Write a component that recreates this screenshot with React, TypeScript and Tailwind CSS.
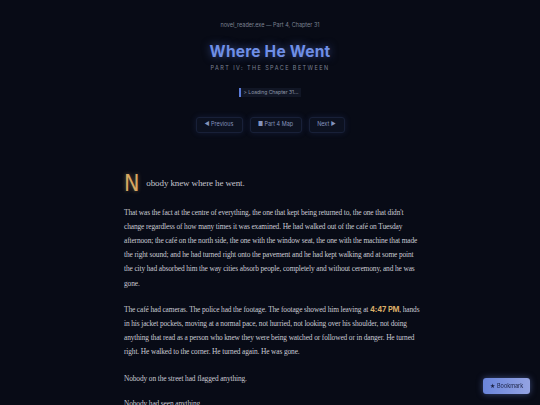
import React from 'react';

const serif = { fontFamily: '"Liberation Serif", "DejaVu Serif", serif' };

export default function App() {
  return (
    <div className="min-h-screen bg-[#080b16] text-[#c9cad3]">
      {/* Header */}
      <header className="flex flex-col items-center pt-[23px] font-['Inter',sans-serif]">
        <p className="text-[5.5px] text-[#7d8292] leading-none">novel_reader.exe — Part 4, Chapter 31</p>
        <h1 className="mt-[15px] text-[15.5px] font-bold leading-none tracking-[0.2px] text-[#6f8fe6] [text-shadow:0_0_8px_rgba(96,130,230,0.55)]">
          Where He Went
        </h1>
        <p className="mt-[7px] text-[5.5px] leading-none tracking-[0.26em] text-[#7b8194] uppercase">
          Part IV: The Space Between
        </p>
        <div className="mt-[16px] flex h-[9px] items-center border-l-2 border-[#5b7bd8] bg-[#111625] pl-[3px] pr-[3px]">
          <span className="text-[5px] leading-none text-[#8f96a8]">&gt; Loading Chapter 31...</span>
        </div>
        <nav className="mt-[20px] flex gap-[7px]">
          <button className="h-[16px] w-[47px] rounded-[3px] border border-[#182038] bg-[#0c1120] text-[5.5px] text-[#8593bd] shadow-[0_0_6px_rgba(70,100,200,0.18)]">
            ◀ Previous
          </button>
          <button className="h-[16px] w-[52px] rounded-[3px] border border-[#182038] bg-[#0c1120] text-[5.5px] text-[#8593bd] shadow-[0_0_6px_rgba(70,100,200,0.18)]">
            ■ Part 4 Map
          </button>
          <button className="h-[16px] w-[36px] rounded-[3px] border border-[#182038] bg-[#0c1120] text-[5.5px] text-[#8593bd] shadow-[0_0_6px_rgba(70,100,200,0.18)]">
            Next ▶
          </button>
        </nav>
      </header>

      {/* Chapter text */}
      <article className="mx-auto mt-[39px] w-[300px] pl-[4px] text-[7.4px] leading-[14.2px] tracking-[-0.12px]" style={serif}>
        <p className="flex items-center gap-[7px]">
          <span className="font-['Liberation_Sans_Narrow','DejaVu_Sans_Condensed',sans-serif] text-[23px] font-light leading-none text-[#d7a862] [text-shadow:0_0_4px_rgba(215,168,98,0.45)]">
            N
          </span>
          <span className="text-[9px] text-[#c4c5ce]">obody knew where he went.</span>
        </p>
        <p className="mt-[11px]">
          That was the fact at the centre of everything, the one that kept being returned to, the one that didn't change
          regardless of how many times it was examined. He had walked out of the café on Tuesday afternoon; the café on
          the north side, the one with the window seat, the one with the machine that made the right sound; and he had
          turned right onto the pavement and he had kept walking and at some point the city had absorbed him the way
          cities absorb people, completely and without ceremony, and he was gone.
        </p>
        <p className="mt-[12px]">
          The café had cameras. The police had the footage. The footage showed him leaving at{' '}
          <span className="font-['Inter',sans-serif] font-bold leading-none text-[#d9ac66]">4:47 PM</span>, hands in his jacket
          pockets, moving at a normal pace, not hurried, not looking over his shoulder, not doing anything that read as a
          person who knew they were being watched or followed or in danger. He turned right. He walked to the corner. He
          turned again. He was gone.
        </p>
        <p className="mt-[12px]">Nobody on the street had flagged anything.</p>
        <p className="mt-[11px]">Nobody had seen anything.</p>
      </article>

      <button className="fixed bottom-[11px] right-[10px] h-[16px] w-[47px] rounded-[3px] bg-gradient-to-r from-[#6a85db] to-[#94a3e2] font-['Inter',sans-serif] text-[5.5px] text-[#1a2142] shadow-[0_0_6px_rgba(110,135,220,0.5)]">
        ★ Bookmark
      </button>
    </div>
  );
}
